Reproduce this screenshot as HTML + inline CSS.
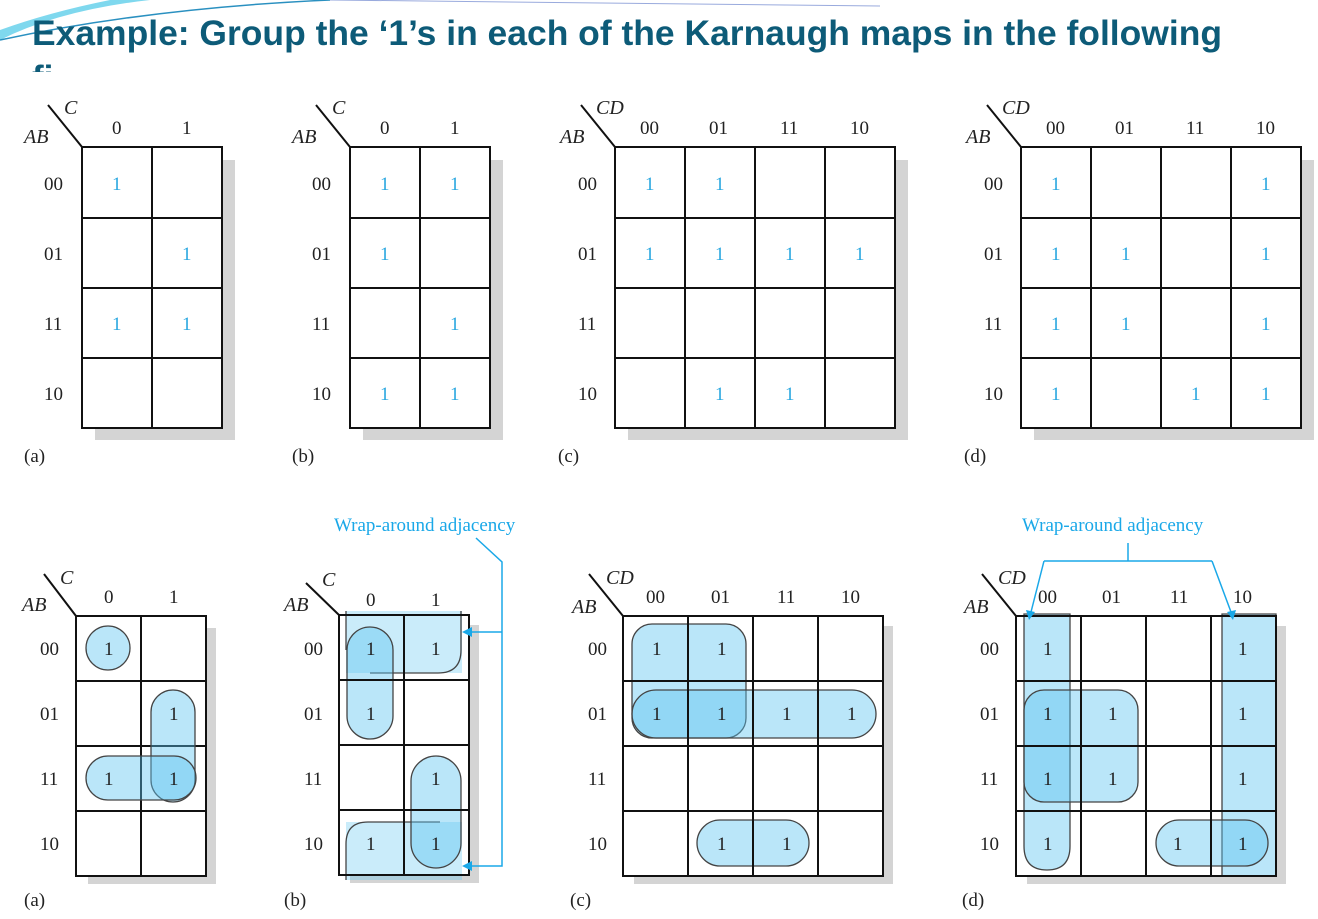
<!DOCTYPE html>
<html><head><meta charset="utf-8"><style>
html,body{margin:0;padding:0;background:#fff;width:1318px;height:919px;overflow:hidden}
svg{display:block}
.t{font-family:"Liberation Serif",serif;font-size:19px;fill:#222}
.i{font-family:"Liberation Serif",serif;font-style:italic;font-size:20px;fill:#222}
.b{font-family:"Liberation Serif",serif;font-size:19px;fill:#2aa7e0}
.g{fill:none;stroke:#111;stroke-width:2}
.sh{fill:#d4d4d4}
.p{fill:rgba(90,195,240,0.42);stroke:#444;stroke-width:1.3}
.q{fill:rgba(90,195,240,0.32);stroke:none}
.w{fill:none;stroke:#1aa8e8;stroke-width:1.5}
.wt{font-family:"Liberation Serif",serif;font-size:19px;fill:#1aa8e8}
</style></head><body>
<svg width="1318" height="919" viewBox="0 0 1318 919">
<defs><clipPath id="c"><rect x="0" y="60" width="200" height="12"/></clipPath></defs>
<path d="M0 40 Q60 10 150 0 L110 0 Q50 12 0 30Z" fill="#7fd8ee"/>
<path d="M0 40 Q150 8 330 0" stroke="#2a90c0" stroke-width="1.5" fill="none"/>
<path d="M330 0 Q600 4 880 6" stroke="#9ad" stroke-width="1" fill="none"/>
<text x="32" y="45" textLength="1190" lengthAdjust="spacingAndGlyphs" font-family="'Liberation Sans',sans-serif" font-weight="bold" font-size="35" fill="#0d5b78">Example: Group the ‘1’s in each of the Karnaugh maps in the following</text>
<text x="32" y="90" font-family="'Liberation Sans',sans-serif" font-weight="bold" font-size="35" fill="#0d5b78" clip-path="url(#c)">fi</text>

<!-- TOP (a) -->
<g>
<rect class="sh" x="222" y="160" width="13" height="280"/><rect class="sh" x="95" y="428" width="140" height="12"/>
<rect x="82" y="147" width="140" height="281" fill="#fff"/>
<path class="g" d="M82 147H222V428H82Z M152 147V428 M82 218H222 M82 288H222 M82 358H222 M48 105L82 147"/>
<text class="i" x="64" y="114">C</text><text class="i" x="24" y="143">AB</text>
<text class="t" x="112" y="134">0</text><text class="t" x="182" y="134">1</text>
<text class="t" x="44" y="190">00</text><text class="t" x="44" y="260">01</text><text class="t" x="44" y="330">11</text><text class="t" x="44" y="400">10</text>
<text class="b" x="112" y="190">1</text><text class="b" x="182" y="260">1</text><text class="b" x="112" y="330">1</text><text class="b" x="182" y="330">1</text>
<text class="t" x="24" y="462">(a)</text>
</g>
<!-- TOP (b) -->
<g>
<rect class="sh" x="490" y="160" width="13" height="280"/><rect class="sh" x="363" y="428" width="140" height="12"/>
<rect x="350" y="147" width="140" height="281" fill="#fff"/>
<path class="g" d="M350 147H490V428H350Z M420 147V428 M350 218H490 M350 288H490 M350 358H490 M316 105L350 147"/>
<text class="i" x="332" y="114">C</text><text class="i" x="292" y="143">AB</text>
<text class="t" x="380" y="134">0</text><text class="t" x="450" y="134">1</text>
<text class="t" x="312" y="190">00</text><text class="t" x="312" y="260">01</text><text class="t" x="312" y="330">11</text><text class="t" x="312" y="400">10</text>
<text class="b" x="380" y="190">1</text><text class="b" x="450" y="190">1</text><text class="b" x="380" y="260">1</text><text class="b" x="450" y="330">1</text><text class="b" x="380" y="400">1</text><text class="b" x="450" y="400">1</text>
<text class="t" x="292" y="462">(b)</text>
</g>
<!-- TOP (c) -->
<g>
<rect class="sh" x="895" y="160" width="13" height="280"/><rect class="sh" x="628" y="428" width="280" height="12"/>
<rect x="615" y="147" width="280" height="281" fill="#fff"/>
<path class="g" d="M615 147H895V428H615Z M685 147V428 M755 147V428 M825 147V428 M615 218H895 M615 288H895 M615 358H895 M581 105L615 147"/>
<text class="i" x="596" y="114">CD</text><text class="i" x="560" y="143">AB</text>
<text class="t" x="640" y="134">00</text><text class="t" x="709" y="134">01</text><text class="t" x="780" y="134">11</text><text class="t" x="850" y="134">10</text>
<text class="t" x="578" y="190">00</text><text class="t" x="578" y="260">01</text><text class="t" x="578" y="330">11</text><text class="t" x="578" y="400">10</text>
<text class="b" x="645" y="190">1</text><text class="b" x="715" y="190">1</text>
<text class="b" x="645" y="260">1</text><text class="b" x="715" y="260">1</text><text class="b" x="785" y="260">1</text><text class="b" x="855" y="260">1</text>
<text class="b" x="715" y="400">1</text><text class="b" x="785" y="400">1</text>
<text class="t" x="558" y="462">(c)</text>
</g>
<!-- TOP (d) -->
<g>
<rect class="sh" x="1301" y="160" width="13" height="280"/><rect class="sh" x="1034" y="428" width="280" height="12"/>
<rect x="1021" y="147" width="280" height="281" fill="#fff"/>
<path class="g" d="M1021 147H1301V428H1021Z M1091 147V428 M1161 147V428 M1231 147V428 M1021 218H1301 M1021 288H1301 M1021 358H1301 M987 105L1021 147"/>
<text class="i" x="1002" y="114">CD</text><text class="i" x="966" y="143">AB</text>
<text class="t" x="1046" y="134">00</text><text class="t" x="1115" y="134">01</text><text class="t" x="1186" y="134">11</text><text class="t" x="1256" y="134">10</text>
<text class="t" x="984" y="190">00</text><text class="t" x="984" y="260">01</text><text class="t" x="984" y="330">11</text><text class="t" x="984" y="400">10</text>
<text class="b" x="1051" y="190">1</text><text class="b" x="1261" y="190">1</text>
<text class="b" x="1051" y="260">1</text><text class="b" x="1121" y="260">1</text><text class="b" x="1261" y="260">1</text>
<text class="b" x="1051" y="330">1</text><text class="b" x="1121" y="330">1</text><text class="b" x="1261" y="330">1</text>
<text class="b" x="1051" y="400">1</text><text class="b" x="1191" y="400">1</text><text class="b" x="1261" y="400">1</text>
<text class="t" x="964" y="462">(d)</text>
</g>

<!-- BOTTOM (a) -->
<g>
<rect class="sh" x="206" y="628" width="10" height="256"/><rect class="sh" x="88" y="876" width="128" height="8"/>
<rect x="76" y="616" width="130" height="260" fill="#fff"/>
<path class="g" d="M76 616H206V876H76Z M141 616V876 M76 681H206 M76 746H206 M76 811H206 M44 574L76 616"/>
<text class="i" x="60" y="584">C</text><text class="i" x="22" y="611">AB</text>
<text class="t" x="104" y="603">0</text><text class="t" x="169" y="603">1</text>
<circle class="p" cx="108" cy="648" r="22"/>
<rect class="p" x="151" y="690" width="44" height="112" rx="22"/>
<rect class="p" x="86" y="756" width="110" height="44" rx="22"/>
<text class="t" x="40" y="655">00</text><text class="t" x="40" y="720">01</text><text class="t" x="40" y="785">11</text><text class="t" x="40" y="850">10</text>
<text class="t" x="104" y="655">1</text><text class="t" x="169" y="720">1</text><text class="t" x="104" y="785">1</text><text class="t" x="169" y="785">1</text>
<text class="t" x="24" y="906">(a)</text>
</g>
<!-- BOTTOM (b) -->
<g>
<rect class="sh" x="469" y="625" width="10" height="258"/><rect class="sh" x="350" y="875" width="129" height="8"/>
<rect x="339" y="615" width="130" height="260" fill="#fff"/>
<rect class="q" x="346" y="611" width="116" height="62"/>
<rect class="q" x="346" y="822" width="116" height="58"/>
<path class="p" d="M346 650V611 M461 611V650Q461 673 438 673H370" style="fill:none"/>
<path class="p" d="M346 880V844Q346 822 368 822H440" style="fill:none"/>
<rect class="p" x="347" y="627" width="46" height="112" rx="23"/>
<rect class="p" x="411" y="756" width="50" height="112" rx="25"/>
<path class="g" d="M339 615H469V875H339Z M404 615V875 M339 680H469 M339 745H469 M339 810H469 M306 583L339 615"/>
<text class="i" x="322" y="586">C</text><text class="i" x="284" y="611">AB</text>
<text class="t" x="366" y="606">0</text><text class="t" x="431" y="606">1</text>
<text class="t" x="304" y="655">00</text><text class="t" x="304" y="720">01</text><text class="t" x="304" y="785">11</text><text class="t" x="304" y="850">10</text>
<text class="t" x="366" y="655">1</text><text class="t" x="431" y="655">1</text><text class="t" x="366" y="720">1</text><text class="t" x="431" y="785">1</text><text class="t" x="366" y="850">1</text><text class="t" x="431" y="850">1</text>
<text class="wt" x="334" y="531">Wrap-around adjacency</text>
<path class="w" d="M476 538L502 562V866H470 M502 632H470"/>
<path d="M462 632L472 627V637Z M462 866L472 861V871Z" fill="#1aa8e8"/>
<text class="t" x="284" y="906">(b)</text>
</g>
<!-- BOTTOM (c) -->
<g>
<rect class="sh" x="883" y="626" width="10" height="258"/><rect class="sh" x="634" y="876" width="259" height="8"/>
<rect x="623" y="616" width="260" height="260" fill="#fff"/>
<rect class="p" x="632" y="624" width="114" height="114" rx="20"/>
<rect class="p" x="632" y="690" width="244" height="48" rx="24"/>
<rect class="p" x="697" y="820" width="112" height="46" rx="23"/>
<path class="g" d="M623 616H883V876H623Z M688 616V876 M753 616V876 M818 616V876 M623 681H883 M623 746H883 M623 811H883 M589 574L623 616"/>
<text class="i" x="606" y="584">CD</text><text class="i" x="572" y="613">AB</text>
<text class="t" x="646" y="603">00</text><text class="t" x="711" y="603">01</text><text class="t" x="777" y="603">11</text><text class="t" x="841" y="603">10</text>
<text class="t" x="588" y="655">00</text><text class="t" x="588" y="720">01</text><text class="t" x="588" y="785">11</text><text class="t" x="588" y="850">10</text>
<text class="t" x="652" y="655">1</text><text class="t" x="717" y="655">1</text>
<text class="t" x="652" y="720">1</text><text class="t" x="717" y="720">1</text><text class="t" x="782" y="720">1</text><text class="t" x="847" y="720">1</text>
<text class="t" x="717" y="850">1</text><text class="t" x="782" y="850">1</text>
<text class="t" x="570" y="906">(c)</text>
</g>
<!-- BOTTOM (d) -->
<g>
<rect class="sh" x="1276" y="626" width="10" height="258"/><rect class="sh" x="1027" y="876" width="259" height="8"/>
<rect x="1016" y="616" width="260" height="260" fill="#fff"/>
<path class="p" d="M1024 614H1070V846Q1070 870 1047 870Q1024 870 1024 846Z"/>
<path class="p" d="M1222 614H1276V876H1222Z"/>
<rect class="p" x="1024" y="690" width="114" height="112" rx="20"/>
<rect class="p" x="1156" y="820" width="112" height="46" rx="23"/>
<path class="g" d="M1016 616H1276V876H1016Z M1081 616V876 M1146 616V876 M1211 616V876 M1016 681H1276 M1016 746H1276 M1016 811H1276 M982 574L1016 616"/>
<text class="i" x="998" y="584">CD</text><text class="i" x="964" y="613">AB</text>
<text class="t" x="1038" y="603">00</text><text class="t" x="1102" y="603">01</text><text class="t" x="1170" y="603">11</text><text class="t" x="1233" y="603">10</text>
<text class="t" x="980" y="655">00</text><text class="t" x="980" y="720">01</text><text class="t" x="980" y="785">11</text><text class="t" x="980" y="850">10</text>
<text class="t" x="1043" y="655">1</text><text class="t" x="1238" y="655">1</text>
<text class="t" x="1043" y="720">1</text><text class="t" x="1108" y="720">1</text><text class="t" x="1238" y="720">1</text>
<text class="t" x="1043" y="785">1</text><text class="t" x="1108" y="785">1</text><text class="t" x="1238" y="785">1</text>
<text class="t" x="1043" y="850">1</text><text class="t" x="1173" y="850">1</text><text class="t" x="1238" y="850">1</text>
<text class="wt" x="1022" y="531">Wrap-around adjacency</text>
<path class="w" d="M1128 543V561 M1044 561H1212 M1044 561L1031 612 M1212 561L1231 612"/>
<path d="M1029 620L1026 610L1035 612Z M1233 620L1227 612L1236 610Z" fill="#1aa8e8"/>
<text class="t" x="962" y="906">(d)</text>
</g>
</svg>
</body></html>
